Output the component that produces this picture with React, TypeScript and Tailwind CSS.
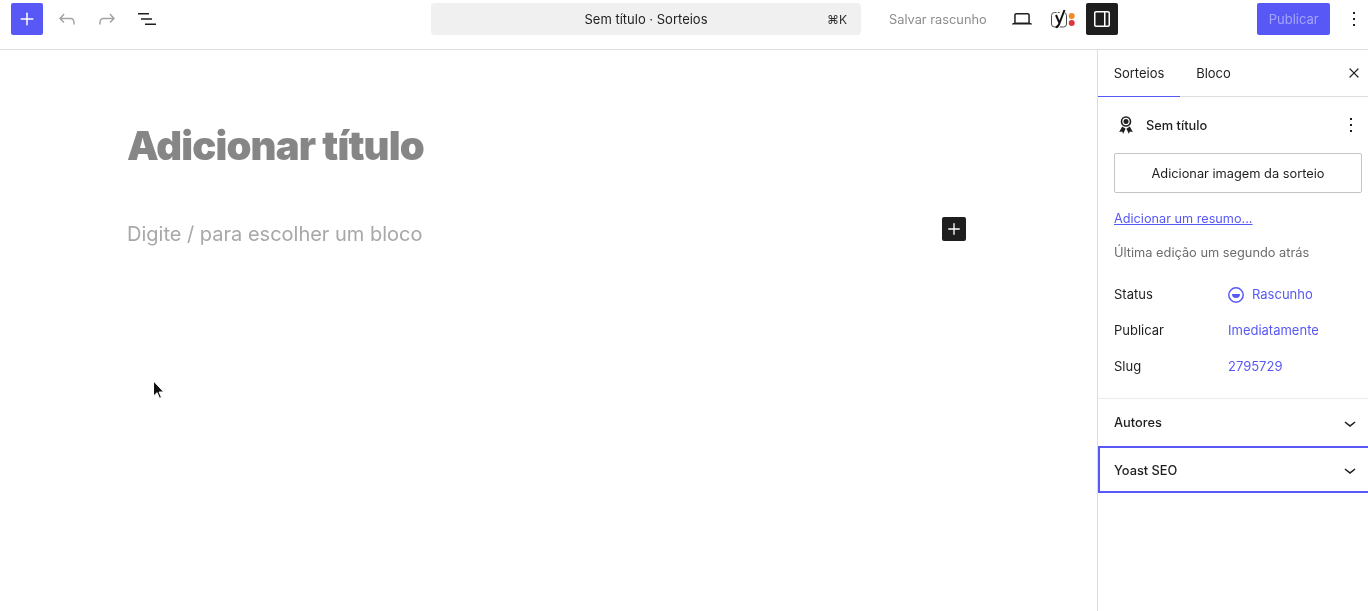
import { Plus, X } from "lucide-react";

function Kebab({ className = "" }: { className?: string }) {
  return (
    <svg viewBox="0 0 24 24" width="24" height="24" className={className} fill="currentColor">
      <path d="M13 19h-2v-2h2v2Zm0-6h-2v-2h2v2Zm0-6h-2V5h2v2Z" />
    </svg>
  );
}

function Chevron({ className = "" }: { className?: string }) {
  return (
    <svg viewBox="0 0 24 24" width="24" height="24" fill="currentColor" className={`text-[#1e1e1e] ${className}`}>
      <path d="M17.5 11.6 12 16l-5.5-4.4.9-1.2L12 14l4.6-3.6 1 1.2z" />
    </svg>
  );
}

function UndoIcon({ flip = false }: { flip?: boolean }) {
  return (
    <svg
      viewBox="0 0 24 24"
      width="24"
      height="24"
      fill="currentColor"
      className={flip ? "-scale-x-100" : ""}
    >
      <path d="M18.3 11.7c-.6-.6-1.4-.9-2.3-.9H6.7l2.9-3.3-1.1-1-4.5 5L8.5 16l1-1-2.7-2.7H16c.5 0 .9.2 1.3.5 1 1 1 3.4 1 4.5v.3h1.5v-.2c0-1.5 0-4.3-1.5-5.7z" />
    </svg>
  );
}

function TopBar() {
  return (
    <header className="flex h-[50px] shrink-0 items-start border-b border-[#dedede] pt-[3px] text-[13px] will-change-transform">
      <div className="flex w-[431px] shrink-0 items-center pl-[11px]">
        <button type="button" className="flex size-8 items-center justify-center rounded-[2px] bg-[#5858f6] text-white">
          <Plus size={20} strokeWidth={1.8} />
        </button>
        <button type="button" className="ml-2 flex size-8 items-center justify-center text-[#a3a3a3]">
          <UndoIcon />
        </button>
        <button type="button" className="ml-2 flex size-8 items-center justify-center text-[#a3a3a3]">
          <UndoIcon flip />
        </button>
        <button type="button" className="ml-2 flex size-8 items-center justify-center text-[#1e1e1e]">
          <svg viewBox="0 0 24 24" width="24" height="24" fill="currentColor">
            <path d="M3 6h11v1.5H3V6Zm3 5.25h11v1.5H6v-1.5ZM10 16.5h11V18H10v-1.5Z" />
          </svg>
        </button>
      </div>

      <div className="relative flex h-8 w-[430px] shrink-0 items-center justify-center rounded-[4px] bg-[#f0f0f0] text-[#1e1e1e]">
        <span className="pt-px text-[13px]">Sem título · Sorteios</span>
        <span className="absolute right-[14px] pt-px text-[12px] text-[#2f2f2f]">⌘K</span>
      </div>

      <span className="mt-[8px] ml-[28px] pt-px text-[12.8px] leading-[16px] whitespace-nowrap text-[#8c8c8c]">
        Salvar rascunho
      </span>

      <button type="button" className="ml-[19px] flex size-8 items-center justify-center text-[#1e1e1e]">
        <svg viewBox="0 0 24 24" width="24" height="24" fill="currentColor">
          <path d="M20.5 16h-.7V8c0-1.1-.9-2-2-2H6.2c-1.1 0-2 .9-2 2v8h-.7c-.8 0-1.5.7-1.5 1.5h20c0-.8-.7-1.5-1.5-1.5zM5.7 8c0-.3.2-.5.5-.5h11.6c.3 0 .5.2.5.5v7.6H5.7V8z" />
        </svg>
      </button>

      <div className="ml-[8px] size-8 shrink-0">
        <svg viewBox="0 0 32 32" width="32" height="32">
          <rect x="5.5" y="9.5" width="15" height="14.5" rx="3" fill="none" stroke="#4a4a4a" strokeWidth="1" />
          <path d="M9.5 10l3.5 9 4.5-13" fill="none" stroke="#fff" strokeWidth="5" />
          <path d="M10 12l3.5 8c-.6 2.5-1.8 3.8-3.8 4.4M18.5 7l-5 13" fill="none" stroke="#111" strokeWidth="2" />
          <circle cx="25.7" cy="13" r="3" fill="#f08a24" />
          <circle cx="25.7" cy="20" r="3" fill="#e0353a" />
        </svg>
      </div>

      <button type="button" className="ml-[8px] flex size-8 items-center justify-center rounded-[2px] bg-[#1e1e1e] text-white">
        <svg viewBox="0 0 24 24" width="24" height="24" fill="currentColor">
          <path d="M18 4H6c-1.1 0-2 .9-2 2v12c0 1.1.9 2 2 2h12c1.1 0 2-.9 2-2V6c0-1.1-.9-2-2-2ZM5.5 18V6c0-.3.2-.5.5-.5h8v13H6c-.3 0-.5-.2-.5-.5Zm13 0c0 .3-.2.5-.5.5h-2.5v-13H18c.3 0 .5.2.5.5v12Z" />
        </svg>
      </button>

      <button type="button" className="ml-[139px] flex h-8 w-[73px] items-center justify-center rounded-[2px] bg-[#5858f6] pt-px pl-px text-[13px] text-[#a5a5fa]">
        Publicar
      </button>

      <Kebab className="mt-[4px] ml-[12px] text-[#1e1e1e]" />
    </header>
  );
}

function MetaRow({ label, children }: { label: string; children: React.ReactNode }) {
  return (
    <div className="flex h-9 items-center">
      <span className="w-[114px] shrink-0 text-[#1e1e1e]">{label}</span>
      {children}
    </div>
  );
}

function Sidebar() {
  return (
    <aside className="flex w-[271px] shrink-0 flex-col border-l border-[#dedede] text-[12.8px] text-[#1e1e1e] will-change-transform">
      <div className="flex h-[47px] shrink-0 items-stretch border-b border-[#dedede]">
        <div className="relative flex w-[82px] items-center justify-center pt-px text-[13px]">
          Sorteios
          <div className="absolute right-0 -bottom-px left-0 h-px bg-[#5858f6]" />
        </div>
        <div className="flex w-[67px] items-center justify-center pt-px text-[13px]">Bloco</div>
        <button type="button" className="ml-auto flex w-[22px] items-center">
          <X size={16} strokeWidth={1.8} />
        </button>
      </div>

      <div className="flex h-[302px] shrink-0 flex-col border-b border-[#ececec] pr-[6px] pl-4">
        <div className="mt-[16px] flex h-6 items-center">
          <svg viewBox="0 0 24 24" width="24" height="24" className="text-[#1e1e1e]" fill="currentColor">
            <path
              fillRule="evenodd"
              d="M12 3.2a5.3 5.3 0 1 1 0 10.6 5.3 5.3 0 0 1 0-10.6Zm0 1.6a3.7 3.7 0 1 0 0 7.4 3.7 3.7 0 0 0 0-7.4Z"
            />
            <circle cx="12" cy="8.5" r="2.5" />
            <path d="M8.2 13.6 5.2 19l2.9-.5 1.1 2.3 2.4-5zM15.8 13.6l3 5.4-2.9-.5-1.1 2.3-2.4-5z" />
          </svg>
          <span className="ml-2 pt-px font-medium">Sem título</span>
          <Kebab className="-mr-[1px] ml-auto" />
        </div>

        <button
          type="button"
          className="mt-[16px] h-10 w-[248px] shrink-0 rounded-[2px] border border-[#c4c4c4] pt-px text-center"
        >
          Adicionar imagem da sorteio
        </button>

        <a className="mt-[16px] text-[12.7px] text-[#5858f6] underline">Adicionar um resumo...</a>
        <p className="mt-[15px] text-[#6d6d6d]">Última edição um segundo atrás</p>

        <div className="mt-[15px] text-[13px]">
          <MetaRow label="Status">
            <svg viewBox="0 0 18 18" width="18" height="18" className="-ml-[1px] text-[#5858f6]">
              <circle cx="9" cy="9" r="7.2" fill="none" stroke="currentColor" strokeWidth="1.5" />
              <path d="M5 8h8a4 4 0 0 1-8 0Z" fill="currentColor" />
            </svg>
            <span className="ml-[7px] text-[#5858f6]">Rascunho</span>
          </MetaRow>
          <MetaRow label="Publicar">
            <span className="text-[#5858f6]">Imediatamente</span>
          </MetaRow>
          <MetaRow label="Slug">
            <span className="text-[#5858f6]">2795729</span>
          </MetaRow>
        </div>
      </div>

      <div className="flex h-[47px] shrink-0 items-center justify-between pr-[6px] pl-4 font-medium">
        Autores
        <Chevron />
      </div>
      <div className="flex h-[47px] shrink-0 items-center justify-between border-y-2 border-l-2 border-[#5858f6] pr-[6px] pl-[14px] font-medium">
        <span className="pt-[2px]">Yoast SEO</span>
        <Chevron />
      </div>
    </aside>
  );
}

export default function App() {
  return (
    <div className="flex h-[611px] w-[1368px] flex-col overflow-hidden bg-white font-['Inter',sans-serif] antialiased">
      <TopBar />
      <div className="flex min-h-0 flex-1">
        <main className="relative flex-1 pl-[127px] will-change-transform">
          <h1 className="mt-[71px] text-[40px] leading-[50px] font-black tracking-[-0.85px] whitespace-nowrap text-[#868686]">
            Adicionar título
          </h1>
          <div className="mt-[46px] flex h-6 w-[839px] items-start justify-between">
            <p className="pt-[2px] text-[20px] leading-[30px] text-[#a8a8a8]">Digite / para escolher um bloco</p>
            <button type="button" className="flex size-6 items-center justify-center rounded-[2px] bg-[#1e1e1e] text-white">
              <Plus size={18} strokeWidth={1.8} />
            </button>
          </div>
          <svg viewBox="0 0 14 20" width="14" height="20" className="absolute top-[330px] left-[152px]">
            <path d="M1.5 1v15l3.6-3.3 2.4 5.6 2-.9-2.4-5.4h4.6L1.5 1Z" fill="#111" stroke="#fff" strokeWidth="1" />
          </svg>
        </main>
        <Sidebar />
      </div>
    </div>
  );
}
